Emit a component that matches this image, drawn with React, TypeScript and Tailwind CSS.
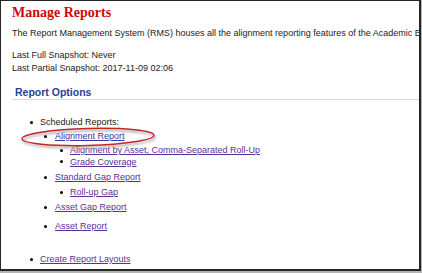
const rows = [
  { label: 'Scheduled Reports:', level: 1, mt: 'mt-[16px]', link: false },
  { label: 'Alignment Report', level: 2, mt: 'mt-[2px]', link: true, blue: true },
  { label: 'Alignment by Asset, Comma-Separated Roll-Up', level: 3, mt: 'mt-[2px]', link: true },
  { label: 'Grade Coverage', level: 3, mt: 'mt-[-0.5px]', link: true },
  { label: 'Standard Gap Report', level: 2, mt: 'mt-[3.5px]', link: true },
  { label: 'Roll-up Gap', level: 3, mt: 'mt-[3px]', link: true },
  { label: 'Asset Gap Report', level: 2, mt: 'mt-[3px]', link: true },
  { label: 'Asset Report', level: 2, mt: 'mt-[7px]', link: true },
  { label: 'Create Report Layouts', level: 1, mt: 'mt-[21px]', link: true },
];

const indent: Record<number, string> = {
  1: 'pl-[18px] gap-[7px]',
  2: 'pl-[32px] gap-[8px]',
  3: 'pl-[48px] gap-[7px]',
};

export default function App() {
  return (
    <div className="w-[422px] h-[273px] bg-[#b4b4b4] overflow-hidden">
      <div className="relative w-[421px] h-[271px] bg-white border-l border-t border-r-2 border-b-2 border-[#262626] overflow-hidden font-['Liberation_Sans',Arial,sans-serif] text-[9px] text-[#222]">
        <div className="pl-[11px] pt-[4px]">
          {/* Header */}
          <h1 className="font-['Liberation_Serif','Times_New_Roman',serif] font-bold text-[14px] leading-[16px] text-[#cc0a0a]">
            Manage Reports
          </h1>
          <p className="mt-[6px] leading-[12px] whitespace-nowrap">
            The Report Management System (RMS) houses all the alignment reporting features of the Academic Benchmarks
          </p>
          <p className="mt-[10px] leading-[12px]">Last Full Snapshot: Never</p>
          <p className="mt-[1px] leading-[12px]">Last Partial Snapshot: 2017-11-09 02:06</p>

          {/* Report options */}
          <h2 className="mt-[11px] font-bold text-[10.5px] leading-[14px] text-[#1c4598] border-b border-[#dcdcdc] pl-[3px]">
            Report Options
          </h2>

          <ul>
            {rows.map((r) => (
              <li
                key={r.label}
                className={`flex items-center leading-[12px] whitespace-nowrap ${r.mt} ${indent[r.level]}`}
              >
                <span className="w-[3px] h-[3px] rounded-full bg-black shrink-0" />
                {r.link ? (
                  <a
                    href="#"
                    className={`underline ${r.blue ? 'text-[#3a34a0]' : 'text-[#5d2f98]'}`}
                  >
                    {r.label}
                  </a>
                ) : (
                  <span>{r.label}</span>
                )}
              </li>
            ))}
          </ul>
        </div>

        {/* Annotation ellipse */}
        <svg
          className="absolute left-[-1px] top-[-1px] pointer-events-none"
          width="422"
          height="273"
          viewBox="0 0 422 273"
        >
          <defs>
            <filter id="blur" x="-20%" y="-50%" width="140%" height="200%">
              <feGaussianBlur stdDeviation="1.2" />
            </filter>
          </defs>
          <ellipse
            cx="89"
            cy="139"
            rx="66"
            ry="8.5"
            transform="rotate(-1.5 89 139)"
            fill="none"
            stroke="#9a9a9a"
            strokeWidth="1.5"
            filter="url(#blur)"
          />
          <ellipse
            cx="88"
            cy="137"
            rx="66"
            ry="8.5"
            transform="rotate(-1.5 88 137)"
            fill="none"
            stroke="#c4262c"
            strokeWidth="1.4"
          />
        </svg>
      </div>
    </div>
  );
}
